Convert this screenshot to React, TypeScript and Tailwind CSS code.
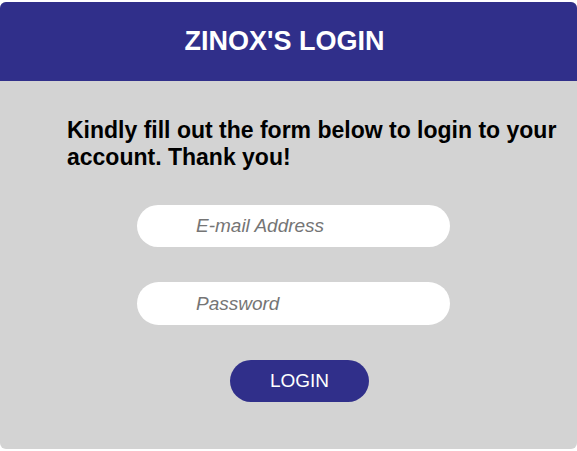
export default function App() {
  return (
    <div className="min-h-[451px] bg-white pt-[2px] font-['Liberation_Sans',Arial,sans-serif]">
      <div className="h-[447px] overflow-hidden rounded-md bg-[#d3d3d3]">
        <div className="flex h-[79px] items-center justify-center bg-[#302f8a] pr-[8px]">
          <h1 className="text-[27px] font-bold text-white">ZINOX'S LOGIN</h1>
        </div>
        <div className="pl-[67px] pt-[36px]">
          <p className="text-[23px] font-bold leading-[27px] text-black">
            Kindly fill out the form below to login to your account. Thank you!
          </p>
        </div>
        <form className="flex flex-col items-start pl-[137px] pt-[34px]" onSubmit={(e) => e.preventDefault()}>
          <input
            type="email"
            placeholder="E-mail Address"
            className="h-[42px] w-[313px] rounded-full bg-white pl-[59px] text-[19px] italic outline-none placeholder:text-[#757575]"
          />
          <input
            type="password"
            placeholder="Password"
            className="mt-[35px] h-[43px] w-[313px] rounded-full bg-white pl-[59px] text-[19px] italic outline-none placeholder:text-[#757575]"
          />
          <button
            type="submit"
            className="ml-[93px] mt-[35px] h-[42px] w-[139px] rounded-full bg-[#302f8a] text-[19px] text-white"
          >
            LOGIN
          </button>
        </form>
      </div>
    </div>
  );
}
